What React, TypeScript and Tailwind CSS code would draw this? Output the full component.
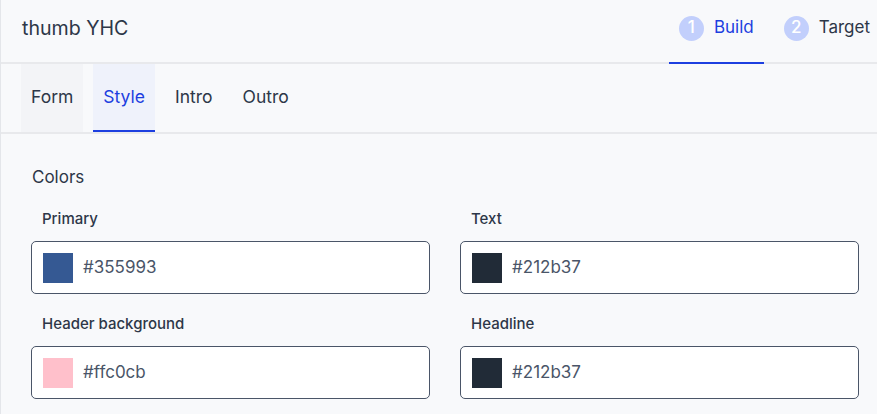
import { useState } from 'react';

const steps = [
    { n: 1, label: 'Build', active: true },
    { n: 2, label: 'Target', active: false },
];

const tabs = ['Form', 'Style', 'Intro', 'Outro'];

const colors = [
    { label: 'Primary', value: '#355993' },
    { label: 'Text', value: '#212b37' },
    { label: 'Header background', value: '#ffc0cb' },
    { label: 'Headline', value: '#212b37' },
];

export default function App() {
    const [activeTab, setActiveTab] = useState('Style');

    return (
        <div className="min-h-screen w-full overflow-hidden bg-[#f8f9fb] border-l border-[#e4e6ea] font-['Inter','Noto_Sans',sans-serif] text-[#2d3748]">
            {/* Header */}
            <div className="flex h-[64px] items-stretch border-b-2 border-[#e8e9ec]">
                <div className="flex flex-1 items-center pl-[21px] pb-[5px] text-[19.6px]">thumb YHC</div>
                <div className="flex shrink-0 gap-[10px] mr-[-3px]">
                    {steps.map((s) => (
                        <div
                            key={s.n}
                            className={`flex items-center gap-[10px] px-[10px] pb-[6px] border-b-2 mb-[-2px] ${s.active ? 'border-[#1d3fe0] text-[#1d3fe0]' : 'border-transparent text-[#2d3748]'}`}
                        >
                            <span className="flex h-[25px] w-[25px] items-center justify-center rounded-full bg-[#c2cffc] text-[17px] font-medium text-white">
                                {s.n}
                            </span>
                            <span className="text-[17px]">{s.label}</span>
                        </div>
                    ))}
                </div>
            </div>

            {/* Tabs */}
            <div className="flex h-[70px] gap-[10px] px-[20px] border-b-2 border-[#e8e9ec]">
                {tabs.map((t) => (
                    <button
                        key={t}
                        onClick={() => setActiveTab(t)}
                        className={`px-[10px] pt-[1px] text-[17.5px] border-b-2 ${activeTab === t
                            ? 'bg-[#eff2fb] text-[#1d3fe0] border-[#1d3fe0]'
                            : t === 'Form'
                                ? 'bg-[#f3f4f7] border-transparent'
                                : 'border-transparent'
                            }`}
                    >
                        {t}
                    </button>
                ))}
            </div>

            {/* Colors */}
            <div className="px-[30px] pt-[31px]">
                <h2 className="pl-[1px] text-[17px] leading-[24px]">Colors</h2>
                <div className="mt-[20px] grid w-[828px] grid-cols-2 gap-x-[30px] gap-y-[20px]">
                    {colors.map((c) => (
                        <div key={c.label}>
                            <div className="pl-[11px] text-[15px] leading-[20px] font-medium">{c.label}</div>
                            <div className="mt-[12px] flex h-[53px] items-center gap-[10px] rounded-[5px] border border-[#4a5568] bg-white pl-[11px]">
                                <span className="h-[30px] w-[30px]" style={{ backgroundColor: c.value }} />
                                <span className="text-[17px] text-[#4a5568]">{c.value}</span>
                            </div>
                        </div>
                    ))}
                </div>
            </div>
        </div>
    );
}
